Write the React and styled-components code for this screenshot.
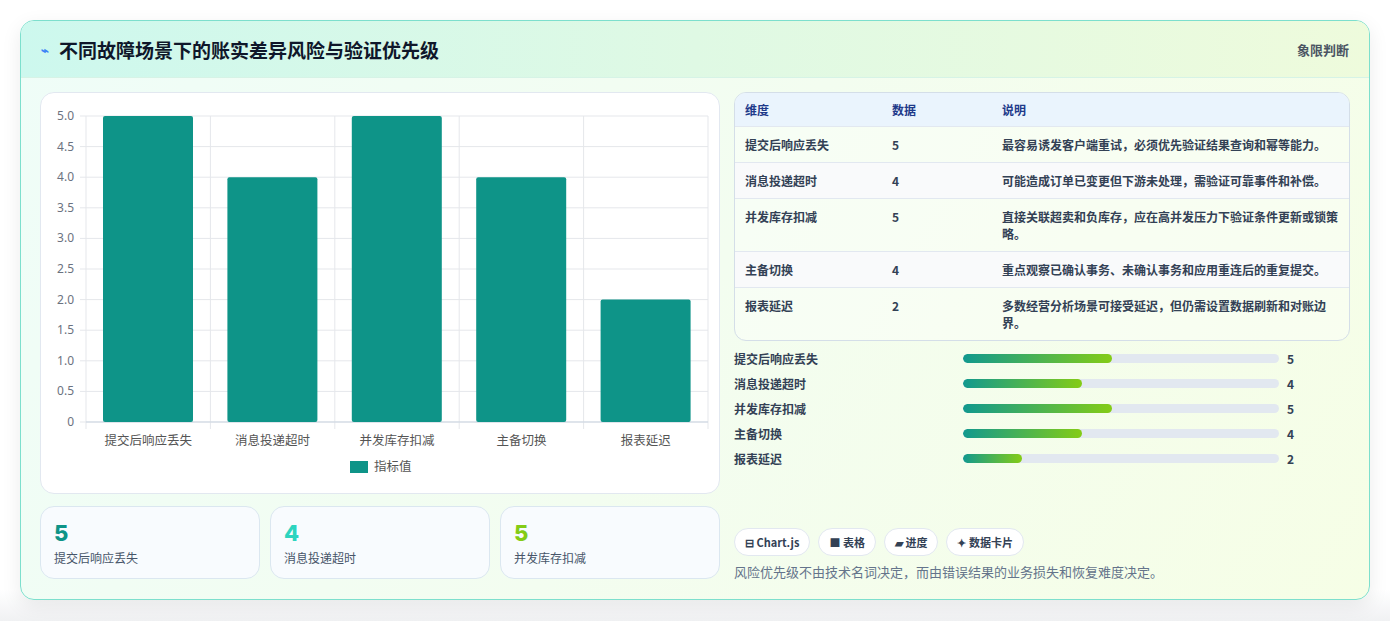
import React from 'react';
import styled, { createGlobalStyle } from 'styled-components';

const Global = createGlobalStyle`
  body { margin: 0; background: #fff; font-family: "Noto Sans CJK SC", "Noto Sans", sans-serif; }
`;

const Page = styled.div`
  padding: 20px 20px 21px 20px;
  background: linear-gradient(#fff 0, #fff 95%, #f0f1f3 100%);
`;

const Card = styled.div`
  height: 578px;
  border: 1px solid #7ddfcd;
  border-radius: 14px;
  background: linear-gradient(120deg, #effdf8 0%, #f3fdf0 50%, #f6fee6 100%);
  box-shadow: 0 6px 20px rgba(0,0,0,0.08);
  overflow: hidden;
  display: flex;
  flex-direction: column;
`;

const Header = styled.div`
  height: 56px;
  display: flex;
  align-items: center;
  justify-content: space-between;
  padding: 0 20px;
  background: linear-gradient(90deg, #cdf8ee 0%, #dff9e4 50%, #eefbdc 100%);
  border-bottom: 1px solid #d6f3e6;
`;

const Title = styled.h1`
  margin: 0;
  font-size: 19px;
  font-weight: 700;
  color: #0f172a;
  display: flex;
  align-items: center;
  gap: 10px;
`;

const Tag = styled.span`
  font-size: 13px;
  color: #4b5563;
  font-weight: 600;
`;

const Body = styled.div`
  flex: 1;
  display: grid;
  grid-template-columns: 680px 1fr;
  gap: 14px;
  padding: 14px 19px 18px 19px;
`;

const Col = styled.div`
  display: flex;
  flex-direction: column;
  gap: 12px;
`;

const ChartCard = styled.div`
  height: 402px;
  background: #fff;
  border: 1px solid #e2e8f0;
  border-radius: 14px;
  box-sizing: border-box;
`;

const Stats = styled.div`
  display: grid;
  grid-template-columns: repeat(3, 1fr);
  gap: 10px;
`;

const Stat = styled.div`
  height: 73px;
  box-sizing: border-box;
  border: 1px solid #dbe7f0;
  border-radius: 14px;
  background: #f8fbfe;
  padding: 12px 13px;
`;

const StatNum = styled.div`
  font-family: "Inter", sans-serif;
  font-size: 22px;
  font-weight: 800;
  line-height: 28px;
  color: ${p => p.c};
`;

const StatLabel = styled.div`
  font-size: 12px;
  color: #475569;
  margin-top: 2px;
`;

const Table = styled.div`
  border: 1px solid #d4dee8;
  border-radius: 12px;
  overflow: hidden;
  background: rgba(255,255,255,0.35);
`;

const Row = styled.div`
  display: grid;
  grid-template-columns: 147px 110px 1fr;
  padding: ${p => (p.head ? '8px 10px' : '9px 10px')};
  min-height: ${p => (p.head ? '16px' : '16px')};
  font-size: 12px;
  line-height: 17px;
  font-weight: ${p => (p.head ? 700 : 600)};
  color: ${p => (p.head ? '#1e3a8a' : '#334155')};
  background: ${p => (p.head ? '#eaf4fd' : p.alt ? 'rgba(248,250,252,0.9)' : 'transparent')};
  border-top: ${p => (p.head ? 'none' : '1px solid #e2e8f0')};
`;

const Bars = styled.div`
  display: flex;
  flex-direction: column;
  gap: 7px;
  margin-top: 8px;
`;

const BarRow = styled.div`
  display: grid;
  grid-template-columns: 229px 316px 1fr;
  align-items: center;
  gap: 0;
  font-size: 12px;
  font-weight: 600;
  color: #334155;
  height: 18px;
`;

const Track = styled.div`
  height: 9px;
  background: #e2e8f0;
  border-radius: 5px;
  overflow: hidden;
`;

const Fill = styled.div`
  height: 100%;
  border-radius: 5px;
  background: linear-gradient(90deg, #11998e, #84cc16);
`;

const Val = styled.span`
  padding-left: 8px;
  font-weight: 700;
`;

const Pills = styled.div`
  display: flex;
  gap: 8px;
  margin-top: auto;
`;

const Pill = styled.span`
  height: 28px;
  box-sizing: border-box;
  padding: 0 10px;
  display: inline-flex;
  align-items: center;
  gap: 4px;
  border: 1px solid #e2e8f0;
  border-radius: 14px;
  background: #fff;
  font-size: 11px;
  font-weight: 600;
  color: #334155;
`;

const Note = styled.p`
  margin: 6px 0 0;
  font-size: 13px;
  color: #64748b;
`;

const data = [
  ['提交后响应丢失', 5, '最容易诱发客户端重试，必须优先验证结果查询和幂等能力。'],
  ['消息投递超时', 4, '可能造成订单已变更但下游未处理，需验证可靠事件和补偿。'],
  ['并发库存扣减', 5, '直接关联超卖和负库存，应在高并发压力下验证条件更新或锁策略。'],
  ['主备切换', 4, '重点观察已确认事务、未确认事务和应用重连后的重复提交。'],
  ['报表延迟', 2, '多数经营分析场景可接受延迟，但仍需设置数据刷新和对账边界。'],
];

function Chart() {
  const x0 = 45, x1 = 667, y0 = 329, yTop = 23;
  const h = (y0 - yTop) / 5;
  const w = (x1 - x0) / 5;
  const ticks = [0, 0.5, 1, 1.5, 2, 2.5, 3, 3.5, 4, 4.5, 5];
  return (
    <svg width="680" height="400" style={{ display: 'block' }}>
      {ticks.map(t => {
        const y = y0 - t * h;
        return (
          <g key={t}>
            <line x1={x0 - 6} x2={x1} y1={y} y2={y} stroke="#e5e7eb" />
            <text x={x0 - 12} y={y + 4} textAnchor="end" fontSize="12" fill="#6b7280" fontFamily="Noto Sans">{t === 0 ? '0' : t.toFixed(1)}</text>
          </g>
        );
      })}
      {[0, 1, 2, 3, 4, 5].map(i => (
        <line key={i} x1={x0 + i * w} x2={x0 + i * w} y1={yTop} y2={y0 + 7} stroke="#e5e7eb" />
      ))}
      <line x1={x0} x2={x1} y1={y0} y2={y0} stroke="#cbd5e1" />
      {data.map((d, i) => (
        <g key={d[0]}>
          <rect x={x0 + i * w + 17} y={y0 - d[1] * h} width={90} height={d[1] * h} fill="#0e9488" rx="2" />
          <text x={x0 + i * w + w / 2} y={y0 + 23} textAnchor="middle" fontSize="12.5" fill="#555" fontFamily="Noto Sans CJK SC">{d[0]}</text>
        </g>
      ))}
      <rect x={309} y={368} width={18} height={12} fill="#0e9488" />
      <text x={333} y={378} fontSize="12.5" fill="#555" fontFamily="Noto Sans CJK SC">指标值</text>
    </svg>
  );
}

const statColors = ['#0e9488', '#2dd4bf', '#84cc16'];

export default function App() {
  return (
    <>
      <Global />
      <Page>
        <Card>
          <Header>
            <Title><span style={{ color: '#3b82f6', fontSize: 13 }}>⌁</span>不同故障场景下的账实差异风险与验证优先级</Title>
            <Tag>象限判断</Tag>
          </Header>
          <Body>
            <Col>
              <ChartCard><Chart /></ChartCard>
              <Stats>
                {data.slice(0, 3).map((d, i) => (
                  <Stat key={d[0]}>
                    <StatNum c={statColors[i]}>{d[1]}</StatNum>
                    <StatLabel>{d[0]}</StatLabel>
                  </Stat>
                ))}
              </Stats>
            </Col>
            <Col style={{ gap: 0 }}>
              <Table>
                <Row head><span>维度</span><span>数据</span><span>说明</span></Row>
                {data.map((d, i) => (
                  <Row key={d[0]} alt={i % 2 === 1}><span>{d[0]}</span><span>{d[1]}</span><span>{d[2]}</span></Row>
                ))}
              </Table>
              <Bars>
                {data.map(d => (
                  <BarRow key={d[0]}>
                    <span>{d[0]}</span>
                    <Track><Fill style={{ width: `${(d[1] / 5) * 47}%` }} /></Track>
                    <Val>{d[1]}</Val>
                  </BarRow>
                ))}
              </Bars>
              <Pills>
                <Pill>⊟ Chart.js</Pill>
                <Pill>■ 表格</Pill>
                <Pill>▰ 进度</Pill>
                <Pill>✦ 数据卡片</Pill>
              </Pills>
              <Note>风险优先级不由技术名词决定，而由错误结果的业务损失和恢复难度决定。</Note>
            </Col>
          </Body>
        </Card>
      </Page>
    </>
  );
}
